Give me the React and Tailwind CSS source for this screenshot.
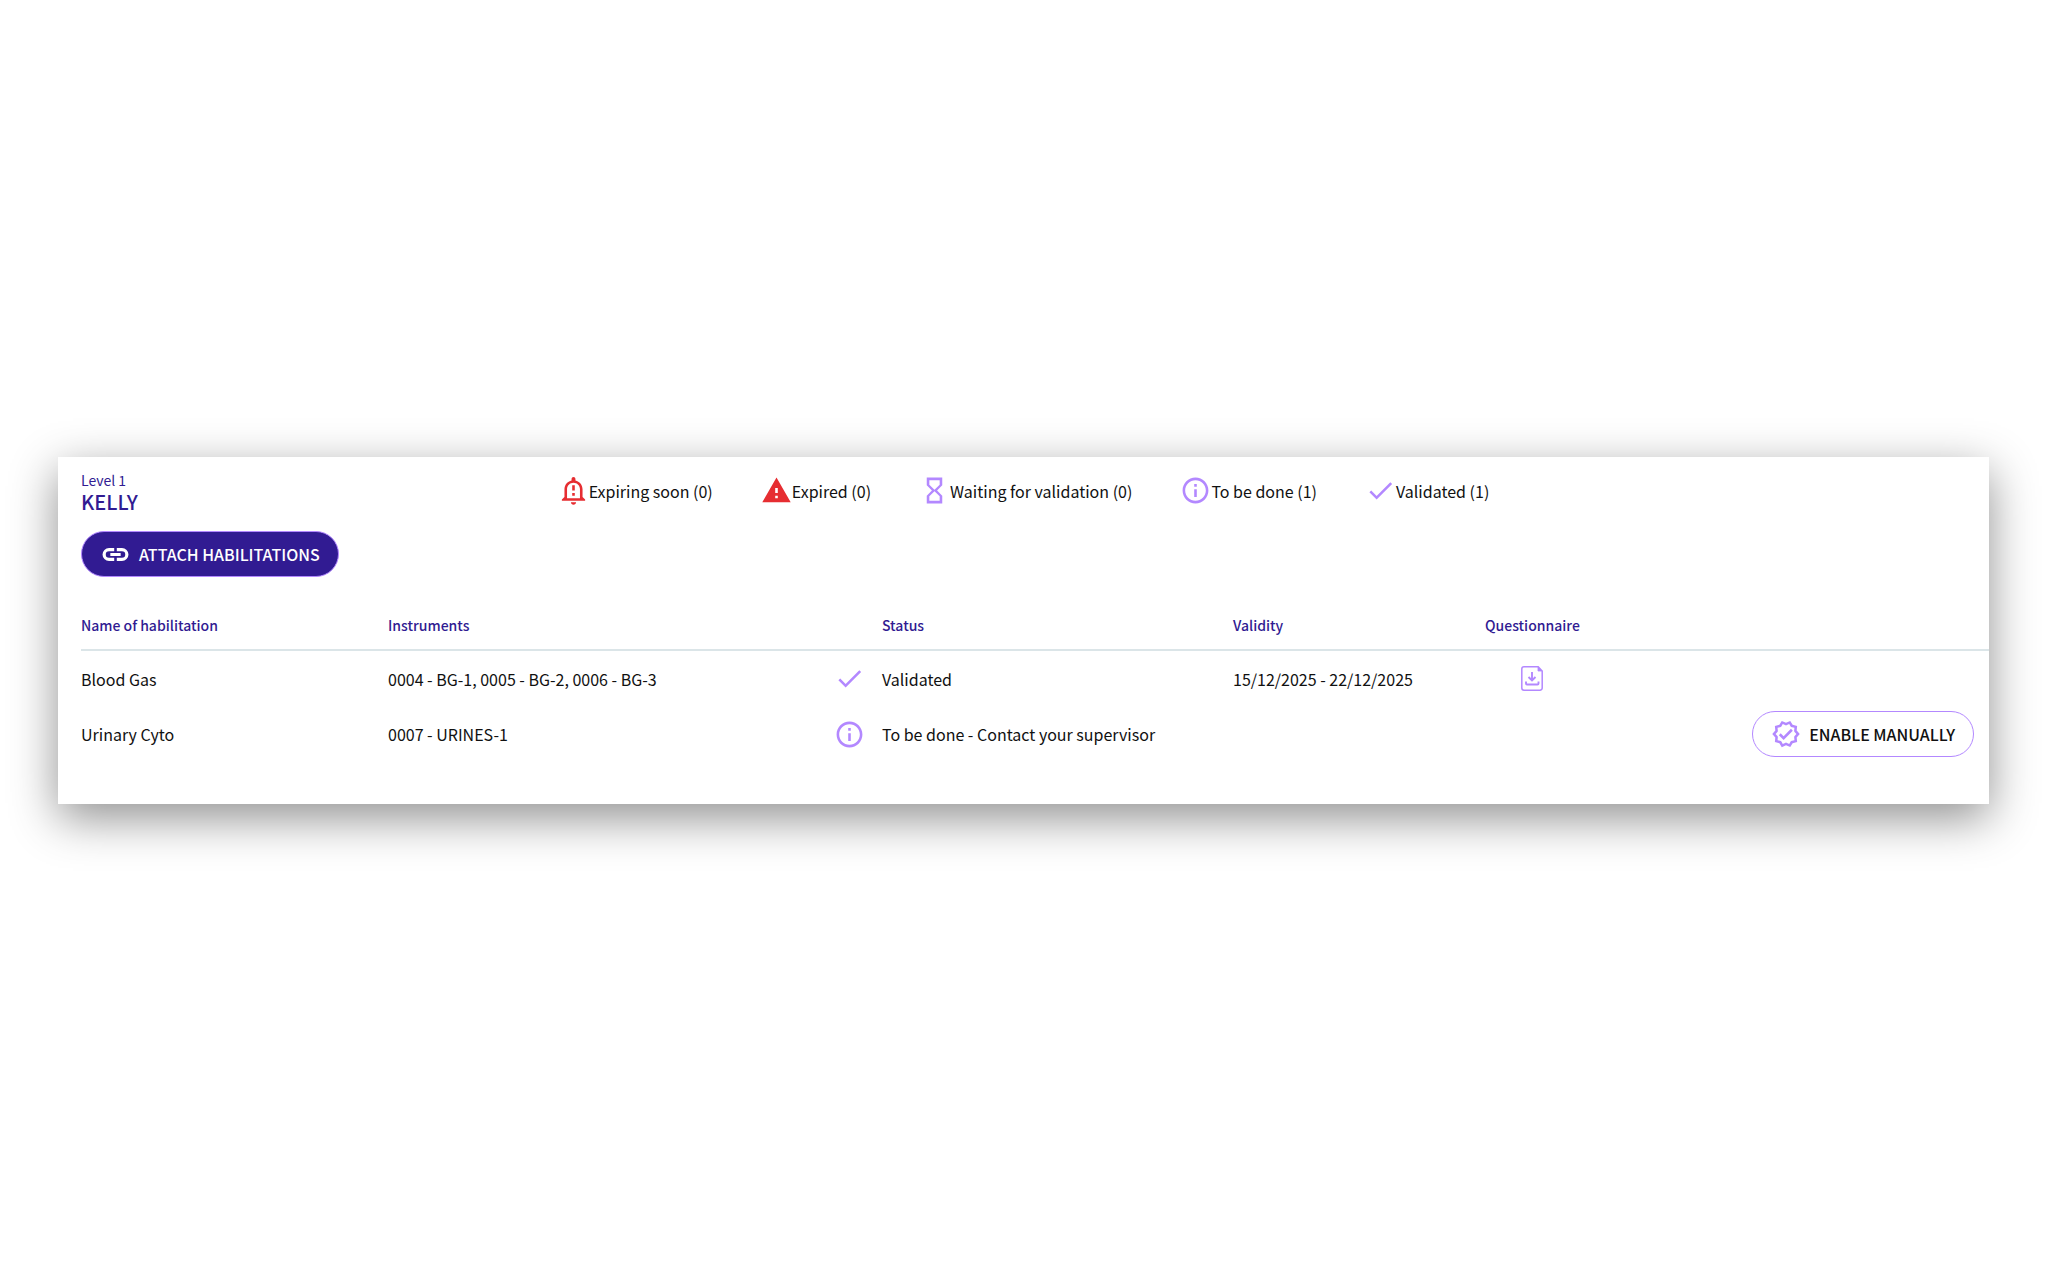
import React from "react";
import {
  MdOutlineNotificationImportant,
  MdWarning,
  MdHourglassEmpty,
  MdInfoOutline,
  MdCheck,
  MdOutlineVerified,
} from "react-icons/md";

const legend = [
  { label: "Expiring soon", count: 0, Icon: MdOutlineNotificationImportant, color: "text-[#e62d31]" },
  { label: "Expired", count: 0, Icon: MdWarning, color: "text-[#e62d31]" },
  { label: "Waiting for validation", count: 0, Icon: MdHourglassEmpty, color: "text-[#b388ff]" },
  { label: "To be done", count: 1, Icon: MdInfoOutline, color: "text-[#b388ff]" },
  { label: "Validated", count: 1, Icon: MdCheck, color: "text-[#b388ff]" },
];

const habilitations = [
  {
    name: "Blood Gas",
    instruments: "0004 - BG-1, 0005 - BG-2, 0006 - BG-3",
    Icon: MdCheck,
    status: "Validated",
    validity: "15/12/2025 - 22/12/2025",
    questionnaire: true,
  },
  {
    name: "Urinary Cyto",
    instruments: "0007 - URINES-1",
    Icon: MdInfoOutline,
    status: "To be done - Contact your supervisor",
    validity: "",
    canEnable: true,
  },
];

function LinkIcon() {
  return (
    <svg viewBox="0 0 24 24" className="size-[31px]" fill="none" stroke="currentColor" strokeWidth="2.5">
      <path d="M11 8.2H7a3.8 3.8 0 0 0 0 7.6h4M13 8.2h4a3.8 3.800 0 0 1 0 7.6h-4M8 12h8" />
    </svg>
  );
}

function DownloadFileIcon() {
  return (
    <svg viewBox="0 0 22 25" className="h-[25px] w-[22px]" fill="none" stroke="#b388ff">
      <path
        d="M3 .8h14.2L21.2 5v17a2.2 2.2 0 0 1-2.2 2.2H3A2.2 2.2 0 0 1 .8 22V3A2.2 2.2 0 0 1 3 .8z"
        strokeWidth="1.5"
      />
      <path d="M17 1v4h4z" fill="#b388ff" strokeWidth="0.8" />
      <path d="M11 6v8M7.5 11l3.5 3.5 3.5-3.5M5 15.5v2a1 1 0 0 0 1 1h10.5a1 1 0 0 0 1-1v-2" strokeWidth="1.9" />
    </svg>
  );
}

function Legend() {
  return (
    <ul className="flex items-center gap-12 self-start pt-[6px]">
      {legend.map(({ label, count, Icon, color }) => (
        <li key={label} className="flex items-center whitespace-nowrap">
          <Icon className={`size-[31px] ${color}`} />
          <span>
            {label} ({count})
          </span>
        </li>
      ))}
    </ul>
  );
}

function HabilitationTable() {
  return (
    <table className="mt-[23px] w-full table-fixed text-left">
      <colgroup>
        <col className="w-[307px]" />
        <col className="w-[446px]" />
        <col className="w-[48px]" />
        <col className="w-[351px]" />
        <col className="w-[252px]" />
        <col className="w-[93px]" />
        <col />
      </colgroup>
      <thead>
        <tr className="h-[50px] border-b-2 border-[#dbe5e8] text-sm text-[#311b92]">
          <th className="font-medium">Name of habilitation</th>
          <th className="font-medium">Instruments</th>
          <th></th>
          <th className="font-medium">Status</th>
          <th className="font-medium">Validity</th>
          <th className="font-medium">Questionnaire</th>
          <th></th>
        </tr>
      </thead>
      <tbody>
        {habilitations.map((row) => (
          <tr key={row.name} className="h-14">
            <td>{row.name}</td>
            <td>{row.instruments}</td>
            <td>
              <row.Icon className="size-[31px] text-[#b388ff]" />
            </td>
            <td>{row.status}</td>
            <td>{row.validity}</td>
            <td>
              {row.questionnaire && (
                <button type="button" aria-label="Download questionnaire" className="mx-auto block">
                  <DownloadFileIcon />
                </button>
              )}
            </td>
            <td className="pr-[15px] text-right">
              {row.canEnable && (
                <button
                  type="button"
                  className="inline-flex h-[46px] items-center gap-2 rounded-full border border-[#b388ff] px-[18px] align-middle font-medium"
                >
                  <MdOutlineVerified className="size-[30px] text-[#b388ff]" />
                  ENABLE MANUALLY
                </button>
              )}
            </td>
          </tr>
        ))}
      </tbody>
    </table>
  );
}

export default function App() {
  return (
    <div className="flex min-h-screen items-center bg-white pr-[59px] pb-2 pl-[58px] font-['Noto_Sans_CJK_SC',sans-serif] text-base text-[#111111]">
      <section className="w-full bg-white pb-[42px] pl-[23px] shadow-[0_14px_44px_rgba(0,0,0,0.44)]">
        <header className="grid grid-cols-[1fr_auto_1fr] pt-3 pr-[23px]">
          <div className="text-[#311b92]">
            <p className="text-sm leading-[22px]">Level 1</p>
            <h1 className="text-xl font-medium leading-[22px]">KELLY</h1>
          </div>
          <Legend />
          <div></div>
        </header>
        <button
          type="button"
          className="mt-[18px] flex h-[46px] items-center gap-2 rounded-full border border-[#b388ff] bg-[#311b92] px-[18px] font-medium text-white"
        >
          <LinkIcon />
          ATTACH HABILITATIONS
        </button>
        <HabilitationTable />
      </section>
    </div>
  );
}
